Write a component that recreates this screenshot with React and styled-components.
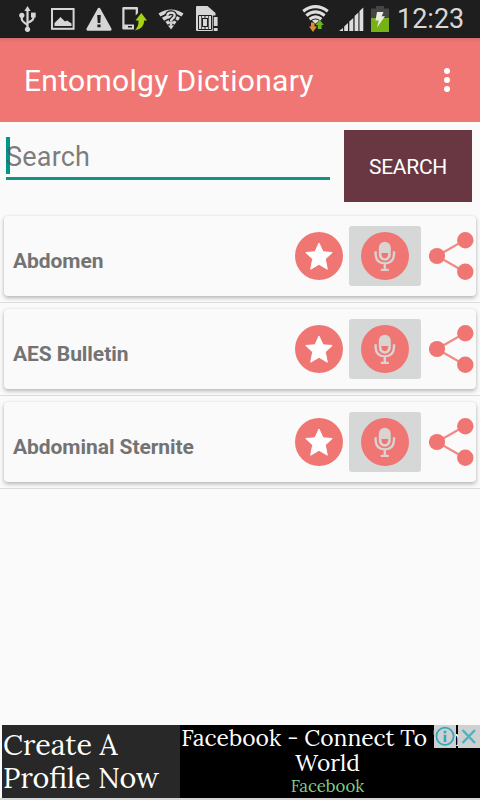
import React from 'react'
import styled, { createGlobalStyle } from 'styled-components';

const words = ['Abdomen', 'AES Bulletin', 'Abdominal Sternite'];

const UsbIcon = () => (
  <StatusIcon width="18" height="26" viewBox="19 6 18 26" left={19}>
    <g fill="none" stroke="#d6d6d6" strokeWidth="2.2">
      <path d="M27.5 9V29" />
      <path d="M21.8 16V19.5Q22 21.5 27.5 24.8" />
      <path d="M33.3 16V18.5Q33 20.5 27.5 22.8" />
    </g>
    <path d="M27.5 6L30.6 11H24.4Z" fill="#d6d6d6" />
    <circle cx="27.5" cy="29.3" r="2.6" fill="#d6d6d6" />
    <circle cx="21.8" cy="15.3" r="2.6" fill="#d6d6d6" />
    <path d="M31 12.6H35.7V17.5H31Z" fill="#d6d6d6" />
  </StatusIcon>
)

const PictureIcon = () => (
  <StatusIcon width="24" height="26" viewBox="51 6 24 26" left={14}>
    <rect x="52" y="9" width="21.6" height="19.8" fill="none" stroke="#d6d6d6" strokeWidth="2" />
    <path d="M54.5 26V23L60.5 17L65 21.5L67 20.5L71.5 23.5V26Z" fill="#d6d6d6" />
  </StatusIcon>
)

const WarningIcon = () => (
  <StatusIcon width="26" height="26" viewBox="86 6 26 26" left={11}>
    <path d="M99 9.5L88 29.2H110Z" fill="#d6d6d6" stroke="#d6d6d6" strokeWidth="3.2" strokeLinejoin="round" />
    <path d="M97.2 15H100.8L100.3 23H97.7ZM97.4 24.6H100.6V27.3H97.4Z" fill="#1e1e1e" />
  </StatusIcon>
)

const PhoneIcon = () => (
  <StatusIcon width="26" height="26" viewBox="122 6 26 26" left={10}>
    <path fillRule="evenodd" d="M123.5 7H137Q138 7 138 8V13L135.7 15.5V9.5H124.5V24.5H134V29.5H123.5Q122.3 29.5 122.3 28.5V8Q122.3 7 123.5 7ZM128 26V27.6H132V26Z" fill="#d6d6d6" />
    <path d="M134.5 30.5Q138.8 27 138.5 20.5H135.5L141.3 13L147 20.5H144.2Q144.2 29 134.5 30.5Z" fill="#a4d40f" />
  </StatusIcon>
)

const WifiUnknownIcon = () => (
  <StatusIcon width="26" height="26" viewBox="158 6 26 26" left={10}>
    <g fill="none" stroke="#d6d6d6" strokeWidth="3.6">
      <path d="M159.5 15Q171 7.5 182.5 15" />
      <path d="M163 19.2Q171 13.5 179 19.2" />
      <path d="M166.5 23.3Q171 20 175.5 23.3" />
    </g>
    <path d="M168 25.6H174L171 29.5Z" fill="#d6d6d6" />
    <path d="M167.2 15.8Q167.5 12.6 171.2 12.6Q175 12.8 174.6 15.8Q174.4 17.5 172.4 18.7Q171 19.7 171 21.6" fill="none" stroke="#1e1e1e" strokeWidth="4.6" />
    <path d="M167.2 15.8Q167.5 12.6 171.2 12.6Q175 12.8 174.6 15.8Q174.4 17.5 172.4 18.7Q171 19.7 171 21.6M171 23.2V25.8" fill="none" stroke="#d6d6d6" strokeWidth="2.4" />
  </StatusIcon>
)

const SimIcon = () => (
  <StatusIcon width="24" height="26" viewBox="196 6 24 26" left={12}>
    <path d="M197 6H207.5L215.5 13V31H197Q196 31 196 30V7Q196 6 197 6Z" fill="#d6d6d6" />
    <path d="M198.5 15.5H211.5V29.5H198.5Z" fill="#d6d6d6" stroke="#1e1e1e" />
    <path d="M201.5 16V29M208.5 16V29" stroke="#1e1e1e" strokeWidth="0.7" />
    <path d="M205 16V18M205 27V29" stroke="#1e1e1e" strokeWidth="0.9" />
    <rect x="202.5" y="18.5" width="5" height="8" fill="#d6d6d6" stroke="#1e1e1e" />
    <path d="M212.7 15.5H220V32H212.7Z" fill="#1e1e1e" />
    <path d="M213.8 17H217.6V26H213.8ZM213.8 28H217.6V31H213.8Z" fill="#d6d6d6" />
  </StatusIcon>
)

const WifiIcon = () => (
  <StatusIcon width="27" height="28" viewBox="302 5 27 28">
    <g fill="none" stroke="#dedede" strokeWidth="3.1">
      <path d="M303.2 11.2Q315.5 2.2 327.8 11.2" />
      <path d="M306.3 15.4Q315.5 8.4 324.7 15.4" />
      <path d="M309.6 19.2Q315.5 14.6 321.4 19.2" />
    </g>
    <path d="M312 20.5Q315.5 18.5 319 20.5L315.5 23.8Z" fill="#dedede" />
    <path d="M311 22.5H314.5V26.5H317L313 32L309 26.5H311Z" fill="#e08a35" />
    <path d="M317.8 29V25H315.5L319.7 19.8L323.8 25H321.6V29Z" fill="#6cb51e" />
  </StatusIcon>
)

const SignalIcon = () => (
  <StatusIcon width="25" height="26" viewBox="339 6 25 26" left={10}>
    <path d="M339 31L343 28V31ZM344.2 26.5L348 23V31H344.2ZM349.3 21.5L353.3 18V31H349.3ZM354.6 16L358.4 12.5V31H354.6ZM359.5 11L363.3 7.5V31H359.5Z" fill="#dedede" />
  </StatusIcon>
)

const BatteryIcon = () => (
  <StatusIcon width="18" height="26" viewBox="371 6 18 26" left={7}>
    <path d="M376 6H384V8.5H389V19H371V8.5H376Z" fill="#454545" />
    <path d="M371 18H389V32H371Z" fill="#76b115" />
    <path d="M377 12H383.5L381.7 16.3H385L377 27.5L378.8 20.5H375.5Z" fill="#e9eee2" />
  </StatusIcon>
)

const StarIcon = () => (
  <svg width="48" height="48" viewBox="0 0 48 48">
    <circle cx="24" cy="24" r="24" fill="#f07673" />
    <path d="M24 11L28 19.8L37.2 20.5L30.3 27L32.3 37.2L24 32.3L15.7 37.2L17.7 27L10.8 20.5L20 19.8Z" fill="#fff" stroke="#fff" strokeWidth="1" strokeLinejoin="round" />
  </svg>
)

const MicIcon = () => (
  <svg width="48" height="48" viewBox="0 0 48 48">
    <circle cx="24" cy="24" r="24" fill="#f07673" />
    <rect x="17.8" y="9.8" width="12" height="19" rx="6" fill="#d9d3d1" />
    <path d="M20.4 21H27.2Q27.2 26.2 23.8 26.2Q20.4 26.2 20.4 21Z" fill="#f07673" />
    <path d="M14.6 19.3V22.3Q15 31.2 23.8 31.4Q32.6 31.2 33 22.3V19.3M23.8 31V38" fill="none" stroke="#d9d3d1" strokeWidth="2.4" />
    <path d="M19.8 36.8H27.8V39H19.8Z" fill="#d9d3d1" />
  </svg>
)

const ShareIcon = () => (
  <svg width="45" height="48" viewBox="0 0 45 48">
    <path d="M36 8L8 24L36 40" fill="none" stroke="#f08a87" strokeWidth="2.2" />
    <g fill="#f07673">
      <circle cx="8" cy="24" r="8.1" />
      <circle cx="36.3" cy="8.2" r="8.2" />
      <circle cx="36.3" cy="39.8" r="8.2" />
    </g>
  </svg>
)

const App = () => {
  return (
    <Screen>
      <GlobalStyle />
      <StatusBar>
        <StatusGroup>
          <UsbIcon />
          <PictureIcon />
          <WarningIcon />
          <PhoneIcon />
          <WifiUnknownIcon />
          <SimIcon />
        </StatusGroup>
        <StatusGroup>
          <WifiIcon />
          <SignalIcon />
          <BatteryIcon />
          <Clock>12:23</Clock>
        </StatusGroup>
      </StatusBar>
      <Toolbar>
        <Title>Entomolgy Dictionary</Title>
        <MenuButton aria-label="menu">
          <Dot />
          <Dot />
          <Dot />
        </MenuButton>
      </Toolbar>
      <SearchRow>
        <SearchField>
          <Cursor />
          <Hint>Search</Hint>
        </SearchField>
        <SearchButton>SEARCH</SearchButton>
      </SearchRow>
      <List>
        {words.map((word) => (
          <Row key={word}>
            <Card>
              <Word>{word}</Word>
              <StarIcon />
              <MicButton aria-label="speak"><MicIcon /></MicButton>
              <ShareIcon />
            </Card>
          </Row>
        ))}
      </List>
      <Banner>
        <BannerLeft>Create A<br />Profile Now</BannerLeft>
        <BannerRight>
          <BannerTitle>Facebook - Connect To The World</BannerTitle>
          <BannerLink>Facebook</BannerLink>
        </BannerRight>
        <AdChoices>
          <AdBox>
            <svg width="22" height="23" viewBox="0 0 22 23">
              <circle cx="11" cy="11.3" r="8.6" fill="none" stroke="#2fa9be" strokeWidth="1.7" />
              <path d="M9.7 5.8H12.3V8.2H9.7ZM9.7 9.7H12.3V17H9.7Z" fill="#2fa9be" />
            </svg>
          </AdBox>
          <AdBox>
            <svg width="22" height="23" viewBox="0 0 22 23">
              <path d="M4.5 5L17 18M17 5L4.5 18" stroke="#45b4c5" strokeWidth="2.4" />
            </svg>
          </AdBox>
        </AdChoices>
      </Banner>
    </Screen>
  )
}

export default App;

const GlobalStyle = createGlobalStyle`
  * {
    box-sizing: border-box;
  }
  body {
    margin: 0;
    background: #fafafa;
  }
  svg {
    display: block;
    flex: none;
  }
`;
const Screen = styled.div`
  width: 480px;
  height: 800px;
  display: flex;
  flex-direction: column;
  overflow: hidden;
  background: #fafafa;
  font-family: Roboto, sans-serif;
`;
const StatusBar = styled.div`
  height: 38px;
  flex: none;
  display: flex;
  justify-content: space-between;
  align-items: center;
  padding-right: 16px;
  background: #1e1e1e;
`;
const StatusGroup = styled.div`
  display: flex;
  align-items: center;
`;
const StatusIcon = styled.svg.withConfig({ shouldForwardProp: (p) => p !== 'left' })`
  margin-left: ${(p) => p.left || 0}px;
`;
const Clock = styled.span`
  width: 67px;
  margin-left: 8px;
  font-size: 27px;
  line-height: 38px;
  color: #d8d8d8;
  white-space: nowrap;
`;
const Toolbar = styled.div`
  height: 84px;
  flex: none;
  display: flex;
  align-items: center;
  justify-content: space-between;
  padding: 0 30px 0 24px;
  background: linear-gradient(#d96a6a, #ec7373 3px, #f07673 5px);
`;
const Title = styled.h1`
  margin: 0;
  padding-top: 2px;
  font-size: 30px;
  font-weight: normal;
  line-height: 36px;
  letter-spacing: 0.3px;
  color: #fff;
  white-space: nowrap;
`;
const MenuButton = styled.button`
  display: flex;
  flex-direction: column;
  gap: 3px;
  padding: 0;
  border: 0;
  background: none;
`;
const Dot = styled.span`
  width: 6px;
  height: 6px;
  border-radius: 50%;
  background: #fff;
`;
const SearchRow = styled.div`
  height: 88px;
  flex: none;
  display: flex;
  align-items: flex-start;
  justify-content: space-between;
  padding: 8px 8px 0 6px;
`;
const SearchField = styled.div`
  width: 324px;
  height: 50px;
  display: flex;
  padding-top: 7px;
  border-bottom: 3px solid #109482;
`;
const Cursor = styled.span`
  width: 4px;
  height: 37px;
  margin-right: -4px;
  background: #009688;
`;
const Hint = styled.span`
  font-size: 27px;
  line-height: 41px;
  letter-spacing: 0.2px;
  color: rgba(90, 90, 90, 0.8);
`;
const SearchButton = styled.button`
  width: 128px;
  height: 72px;
  padding: 2px 0 0;
  border: 0;
  background: #693742;
  color: #fff;
  font-family: inherit;
  font-size: 21px;
  letter-spacing: -0.3px;
`;
const List = styled.div`
  display: flex;
  flex-direction: column;
`;
const Row = styled.div`
  height: 93px;
  padding: 6px 4px;
  border-bottom: 1px solid #dcdcdc;
`;
const Card = styled.div`
  height: 80px;
  display: flex;
  align-items: center;
  padding: 0 2px 0 9px;
  border-radius: 4px;
  background: #fafafa;
  box-shadow: 0 2px 4px rgba(0, 0, 0, 0.27), 0 0 2px rgba(0, 0, 0, 0.08);
`;
const Word = styled.span`
  flex: 1;
  padding-top: 9px;
  font-size: 21px;
  font-weight: bold;
  line-height: 24px;
  letter-spacing: -0.06px;
  color: #737373;
`;
const MicButton = styled.button`
  width: 72px;
  height: 60px;
  display: flex;
  align-items: center;
  justify-content: center;
  margin: 0 8px 0 6px;
  padding: 0;
  border: 0;
  border-radius: 3px;
  background: #d6d7d7;
`;
const Banner = styled.div`
  position: relative;
  height: 75px;
  flex: none;
  display: flex;
  margin-top: auto;
  padding-left: 2px;
  border-bottom: 2px solid #d8d8d8;
  font-family: Lora, 'Liberation Serif', serif;
  color: #fff;
`;
const BannerLeft = styled.div`
  width: 178px;
  padding: 3px 0 0 1px;
  background: #282828;
  font-size: 28.7px;
  line-height: 33px;
  white-space: nowrap;
`;
const BannerRight = styled.div`
  width: 300px;
  display: flex;
  flex-direction: column;
  align-items: center;
  padding-right: 5px;
  background: #000;
  text-align: center;
`;
const BannerTitle = styled.span`
  width: 294px;
  font-size: 22.8px;
  line-height: 25px;
`;
const BannerLink = styled.span`
  font-size: 16.8px;
  line-height: 22px;
  color: #83cd83;
`;
const AdChoices = styled.div`
  position: absolute;
  top: 0;
  right: 0;
  display: flex;
  gap: 2px;
`;
const AdBox = styled.span`
  width: 22px;
  height: 23px;
  background: #cfd0d0;
`;
